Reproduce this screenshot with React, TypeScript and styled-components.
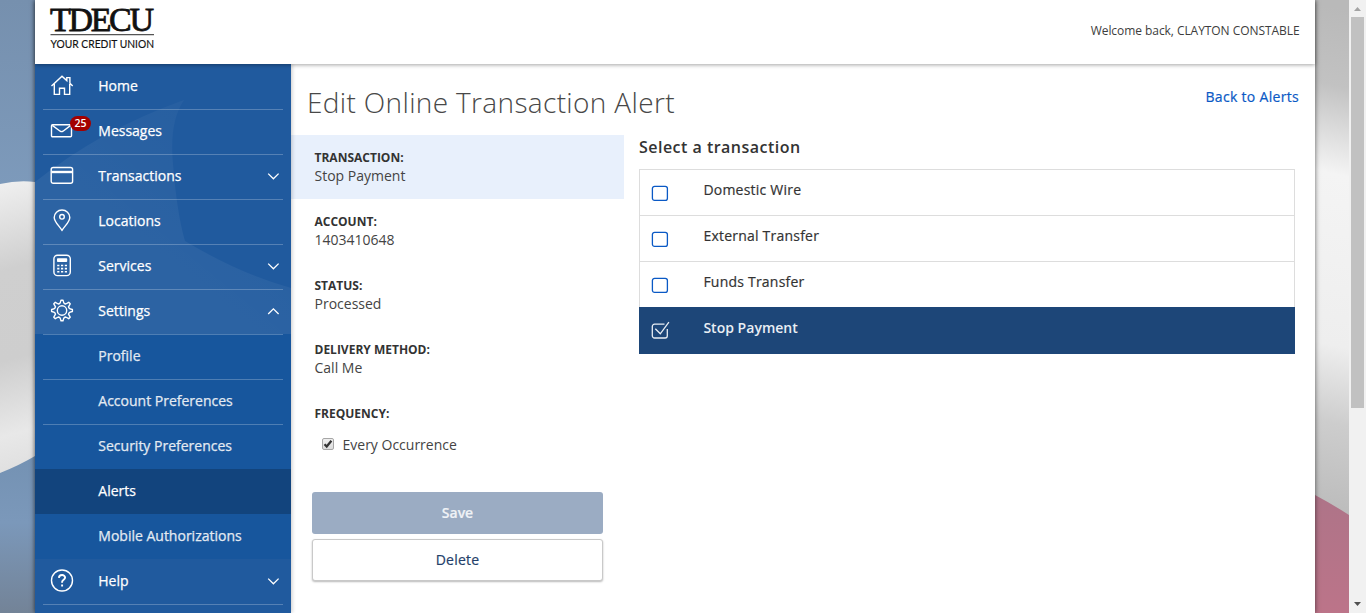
import React from 'react';
import styled, { createGlobalStyle } from 'styled-components';

const GlobalStyle = createGlobalStyle`
  *, *::before, *::after { box-sizing: border-box; }
  html, body { margin: 0; padding: 0; overflow: hidden; }
  body {
    font-family: "Open Sans", "Noto Sans", sans-serif;
    font-size: 14px;
    color: #333;
  }
`;

const Screen = styled.div`
  position: relative;
  display: flex;
  height: 613px;
  overflow: hidden;
`;

const Backdrop = styled.svg`
  position: absolute;
  top: 0;
  left: 0;
  z-index: -1;
`;

const Viewport = styled.div`
  flex: 1;
  display: flex;
  padding: 0 34px 0 35px;
`;

const Page = styled.div`
  flex: 1;
  display: flex;
  flex-direction: column;
  background: #fff;
  box-shadow: 0 0 5px rgba(0, 0, 0, 0.6);
`;

const Header = styled.header`
  position: relative;
  z-index: 1;
  display: flex;
  justify-content: space-between;
  height: 64px;
  padding: 0 15px;
  background: #fff;
  box-shadow: 0 1px 4px rgba(0, 0, 0, 0.36);
`;

const LogoMark = styled.svg`
  overflow: visible;
`;

const Welcome = styled.span`
  margin: 22px 0.5px 0 0;
  color: #3d3d3d;
  font-size: 12px;
  letter-spacing: -0.06px;
  line-height: 17px;
`;

const Body = styled.div`
  flex: 1;
  display: flex;
  min-height: 0;
`;

const Sidebar = styled.nav`
  position: relative;
  z-index: 0;
  width: 256px;
  background: #205a9e;
  box-shadow: 1px 0 4px rgba(0, 0, 0, 0.22);
`;

const SidebarArt = styled.svg`
  position: absolute;
  top: 0;
  left: 0;
  z-index: -1;
`;

const NavRow = styled.div<{ $sub?: boolean; $active?: boolean }>`
  height: 45px;
  padding: 0 8px;
  color: ${(p) => (p.$sub && !p.$active ? '#e3eaf2' : '#fff')};
  background: ${(p) => (p.$active ? '#12447d' : p.$sub ? '#17569d' : 'transparent')};
`;

const NavInner = styled.div<{ $line?: boolean }>`
  display: flex;
  align-items: center;
  height: 45px;
  padding: 0 3px 2px 7px;
  border-top: 1px solid ${(p) => (p.$line ? 'rgba(255, 255, 255, 0.24)' : 'transparent')};
`;

const IconSlot = styled.span`
  position: relative;
  display: flex;
  width: 24px;
  height: 24px;
  margin-right: 24.3px;
`;

const Badge = styled.span`
  position: absolute;
  top: -3px;
  left: 20px;
  width: 21px;
  height: 15px;
  border-radius: 8px;
  background: #a30000;
  font-size: 10.5px;
  font-weight: 600;
  line-height: 15px;
  text-align: center;
`;

const NavLabel = styled.span`
  flex: 1;
  line-height: 20px;
  white-space: nowrap;
  -webkit-text-stroke: 0.25px currentColor;
`;

const Main = styled.main`
  flex: 1;
  min-width: 0;
`;

const TitleBar = styled.div`
  display: flex;
  justify-content: space-between;
  height: 71px;
  padding: 0 16px;
`;

const Title = styled.h1`
  margin: 18px 0 0;
  color: #484848;
  font-size: 28px;
  font-weight: 300;
  letter-spacing: 0.35px;
  line-height: 40px;
`;

const BackLink = styled.a`
  margin: 23px 0 0;
  color: #0a59c5;
  letter-spacing: 0.31px;
  line-height: 20px;
  -webkit-text-stroke: 0.2px currentColor;
`;

const Columns = styled.div`
  display: flex;
`;

const Summary = styled.section`
  width: 333px;
`;

const Field = styled.div<{ $current?: boolean }>`
  height: 64px;
  padding: 14px 24px 0 23.5px;
  background: ${(p) => (p.$current ? '#e8f0fc' : 'transparent')};
`;

const FieldName = styled.div`
  font-size: 12px;
  font-weight: 700;
  line-height: 17px;
  text-transform: uppercase;
`;

const FieldValue = styled.div`
  color: #444;
  line-height: 20px;
`;

const Frequency = styled.label`
  display: flex;
  align-items: center;
  gap: 8.5px;
  height: 20px;
  margin: -21px 0 38px 31px;
  color: #444;
`;

const Tick = styled.span`
  display: flex;
  width: 12px;
  height: 12px;
  border: 1px solid #a6a6a6;
  border-radius: 2px;
  background: linear-gradient(#efefef, #dcdcdc);
`;

const Button = styled.button<{ $primary?: boolean }>`
  display: block;
  width: 291px;
  height: 42px;
  margin: 0 0 5px 21px;
  padding: 0;
  border: ${(p) => (p.$primary ? '0' : '1px solid #c9c9c9')};
  border-radius: 3px;
  background: ${(p) => (p.$primary ? '#9bacc3' : '#fff')};
  box-shadow: ${(p) => (p.$primary ? 'none' : '0 1px 2px rgba(0, 0, 0, 0.28)')};
  color: ${(p) => (p.$primary ? '#eff2f6' : '#23406a')};
  font: ${(p) => (p.$primary ? 600 : 400)} 14px/20px "Open Sans", sans-serif;
  letter-spacing: ${(p) => (p.$primary ? '0' : '0.2px')};
  -webkit-text-stroke: 0.2px currentColor;
`;

const Picker = styled.section`
  flex: 1;
  padding: 0 20px 0 15px;
`;

const PickerTitle = styled.h2`
  margin: 0 0 10px;
  padding-top: 1px;
  font-size: 16px;
  font-weight: 600;
  letter-spacing: 0.48px;
  line-height: 23px;
`;

const OptionList = styled.div`
  display: flex;
  flex-direction: column;
`;

const Option = styled.div<{ $selected?: boolean }>`
  display: flex;
  height: ${(p) => (p.$selected ? '47px' : '46px')};
  padding-left: 11px;
  border: 1px solid ${(p) => (p.$selected ? '#1d4678' : '#ddd')};
  border-bottom-width: ${(p) => (p.$selected ? '1px' : '0')};
  background: ${(p) => (p.$selected ? '#1d4678' : '#fff')};
  color: ${(p) => (p.$selected ? '#e9eef4' : '#333')};
  font-weight: ${(p) => (p.$selected ? 600 : 400)};
  letter-spacing: ${(p) => (p.$selected ? '0.02px' : '0.22px')};
  -webkit-text-stroke: ${(p) => (p.$selected ? '0' : '0.2px currentColor')};
`;

const OptionBox = styled.svg`
  margin: 13px 32.4px 0 0;
`;

const OptionLabel = styled.span`
  margin-top: 10px;
  line-height: 20px;
`;

const Scrollbar = styled.div`
  display: flex;
  flex-direction: column;
  align-items: center;
  width: 17px;
  background: #f1f1f1;
`;

const ScrollTrack = styled.div`
  flex: 1;
`;

const ScrollThumb = styled.div`
  width: 13px;
  height: 391px;
  background: #c1c1c1;
`;

type IconName = 'home' | 'mail' | 'card' | 'pin' | 'calc' | 'gear' | 'help';

const iconShapes: Record<IconName, React.ReactNode> = {
  home: (
    <path d="M1.500 12 12 2.200l4.800 4.400V3.600h3.100v5.700l2.800 2.700M4.300 10v10.400h5.200v-6.200h5v6.200h5.200V10" />
  ),
  mail: (
    <>
      <rect x="1.500" y="5.700" width="20" height="12" rx="1" />
      <path d="m2.300 6.400 7.900 5.800q1.400.9 2.800 0l7.700-5.800" />
    </>
  ),
  card: (
    <>
      <rect x="1.200" y="3.500" width="21.400" height="15.800" rx="2" />
      <path d="M1.500 8h21" strokeWidth="2.400" />
    </>
  ),
  pin: (
    <>
      <path d="M12 21.300C9 16.700 4.200 12.700 4.200 8.400a7.800 7.400 0 0 1 15.600 0c0 4.300-4.800 8.300-7.800 12.900Z" />
      <circle cx="12" cy="7.800" r="2.300" />
    </>
  ),
  calc: (
    <>
      <rect x="3.900" y="1.200" width="16.400" height="20.400" rx="3.600" />
      <rect x="7" y="4.300" width="10.200" height="3.700" rx=".8" fill="currentColor" stroke="none" />
      <path d="M7.200 11.500h9.800M7.200 14.600h9.800M7.200 17.700h9.800" strokeWidth="1.600" strokeDasharray="2.200 1.600" />
    </>
  ),
  gear: (
    <>
      <circle cx="12" cy="11.500" r="4.700" />
      <path
        strokeLinejoin="round"
        d="M11 1.200h2q.6 2.900 1.400 3.300l1.300.5 3-1.700 1.500 1.500-1.700 3 .6 1.400q.5.800 3.300 1.300v2q-2.800.5-3.300 1.300l-.6 1.400 1.700 3-1.500 1.500-3-1.700-1.300.5q-.8.400-1.400 3.300h-2q-.6-2.900-1.400-3.300l-1.300-.5-3 1.700-1.500-1.500 1.700-3-.6-1.400q-.5-.8-3.300-1.300v-2q2.800-.5 3.300-1.300l.6-1.400-1.700-3 1.500-1.500 3 1.700 1.300-.5q.8-.4 1.400-3.300Z"
      />
    </>
  ),
  help: (
    <>
      <circle cx="12" cy="11.500" r="10.500" />
      <path d="M8.900 8.900c.1-3.700 6.200-3.800 6.200-.3 0 2.100-3 2.300-3 4.500v.7M12.100 15.600v1.900" strokeWidth="1.900" />
    </>
  ),
};

function NavIcon({ name }: { name: IconName }) {
  return (
    <svg width="24" height="24" viewBox="0 0 24 24" fill="none" stroke="currentColor" strokeWidth="1.4">
      {iconShapes[name]}
    </svg>
  );
}

function Chevron({ up }: { up?: boolean }) {
  return (
    <svg width="14" height="10" viewBox="0 0 14 10" fill="none" stroke="#fff" strokeWidth="1.3">
      <path d={up ? 'M2.200 8 7.400 2.800 12.600 8' : 'M2.200 2.600 7.400 7.800l5.200-5.200'} />
    </svg>
  );
}

interface NavEntry {
  label: string;
  icon?: IconName;
  badge?: string;
  chevron?: 'up' | 'down';
  line?: boolean;
  active?: boolean;
}

const navEntries: NavEntry[] = [
  { label: 'Home', icon: 'home' },
  { label: 'Messages', icon: 'mail', badge: '25', line: true },
  { label: 'Transactions', icon: 'card', chevron: 'down', line: true },
  { label: 'Locations', icon: 'pin', line: true },
  { label: 'Services', icon: 'calc', chevron: 'down', line: true },
  { label: 'Settings', icon: 'gear', chevron: 'up', line: true },
  { label: 'Profile', line: true },
  { label: 'Account Preferences', line: true },
  { label: 'Security Preferences', line: true },
  { label: 'Alerts', active: true },
  { label: 'Mobile Authorizations' },
  { label: 'Help', icon: 'help', chevron: 'down' },
];

const fields = [
  { name: 'Transaction:', value: 'Stop Payment', current: true },
  { name: 'Account:', value: '1403410648' },
  { name: 'Status:', value: 'Processed' },
  { name: 'Delivery Method:', value: 'Call Me' },
  { name: 'Frequency:', value: '' },
];

const options = ['Domestic Wire', 'External Transfer', 'Funds Transfer', 'Stop Payment'];

function Logo() {
  return (
    <LogoMark width="120" height="60" viewBox="0 0 120 60">
      <text x="0" y="30.700" fontFamily="Liberation Serif" fontSize="34" textLength="104" lengthAdjust="spacing" fill="#111" stroke="#111" strokeWidth=".8">
        TDECU
      </text>
      <path d="M.5 34.700H104" stroke="#555" strokeWidth="1.300" />
      <text x="0.500" y="47.700" fontFamily="Lato" fontSize="11.400" textLength="103.500" lengthAdjust="spacingAndGlyphs" fill="#111" stroke="#111" strokeWidth=".15">
        YOUR CREDIT UNION
      </text>
    </LogoMark>
  );
}

function FlagBackdrop() {
  return (
    <Backdrop width="1349" height="613" viewBox="0 0 1349 613">
      <defs>
        <linearGradient id="skyTop" x1="0" y1="0" x2="0" y2="1">
          <stop offset="0" stopColor="#7690ae" />
          <stop offset="1" stopColor="#7d9abb" />
        </linearGradient>
        <linearGradient id="clothLeft" x1="0" y1="0" x2="0.05" y2="1">
          <stop offset="0" stopColor="#f0f0f0" />
          <stop offset="0.300" stopColor="#cfcfcf" />
          <stop offset="0.600" stopColor="#cecece" />
          <stop offset="0.850" stopColor="#e8e8e8" />
          <stop offset="1" stopColor="#dedede" />
        </linearGradient>
        <linearGradient id="skyBottom" x1="0" y1="0" x2="0" y2="1">
          <stop offset="0" stopColor="#7391b2" />
          <stop offset="0.450" stopColor="#7b98ba" />
          <stop offset="1" stopColor="#738397" />
        </linearGradient>
        <linearGradient id="clothRight" x1="0" y1="0" x2="-0.020" y2="1">
          <stop offset="0" stopColor="#b9b9b9" />
          <stop offset="0.150" stopColor="#c2c2c2" />
          <stop offset="0.320" stopColor="#f4f4f4" />
          <stop offset="0.650" stopColor="#eeeeee" />
          <stop offset="0.800" stopColor="#cdcdcd" />
          <stop offset="1" stopColor="#b9b9b9" />
        </linearGradient>
        <linearGradient id="rose" x1="0" y1="0" x2="0" y2="1">
          <stop offset="0" stopColor="#ad7488" />
          <stop offset="1" stopColor="#bc7489" />
        </linearGradient>
      </defs>
      <path fill="url(#skyTop)" d="M0 0h60v190H0z" />
      <path fill="url(#clothLeft)" d="M0 184q18-4 35-2h20v300H0z" />
      <path fill="url(#skyBottom)" d="M0 473q20-8 35-17l20-8v165H0z" />
      <path fill="url(#clothRight)" d="M1300 0h49v520h-49z" />
      <path fill="url(#rose)" d="M1300 487l15 8q17 9 34 20v98h-49z" />
    </Backdrop>
  );
}

export default function App() {
  return (
    <Screen>
      <GlobalStyle />
      <FlagBackdrop />
      <Viewport>
        <Page>
          <Header>
            <Logo />
            <Welcome>Welcome back, CLAYTON CONSTABLE</Welcome>
          </Header>
          <Body>
            <Sidebar>
              <SidebarArt width="256" height="549" viewBox="0 0 256 549">
                <defs>
                  <linearGradient id="fold" gradientUnits="userSpaceOnUse" x1="150" y1="30" x2="60" y2="140">
                    <stop offset="0" stopColor="#fff" stopOpacity=".03" />
                    <stop offset="1" stopColor="#fff" stopOpacity=".055" />
                  </linearGradient>
                </defs>
                <path
                  fill="url(#fold)"
                  d="M0 118Q65 66 149 36 134 58 138 100 142 150 150 177 205 210 256 224V270H0Z"
                />
              </SidebarArt>
              {navEntries.map((entry) => (
                <NavRow key={entry.label} $sub={!entry.icon} $active={entry.active}>
                  <NavInner $line={entry.line}>
                    <IconSlot>
                      {entry.icon && <NavIcon name={entry.icon} />}
                      {entry.badge && <Badge>{entry.badge}</Badge>}
                    </IconSlot>
                    <NavLabel>{entry.label}</NavLabel>
                    {entry.chevron && <Chevron up={entry.chevron === 'up'} />}
                  </NavInner>
                </NavRow>
              ))}
              <NavRow>
                <NavInner $line />
              </NavRow>
            </Sidebar>
            <Main>
              <TitleBar>
                <Title>Edit Online Transaction Alert</Title>
                <BackLink>Back to Alerts</BackLink>
              </TitleBar>
              <Columns>
                <Summary>
                  {fields.map((field) => (
                    <Field key={field.name} $current={field.current}>
                      <FieldName>{field.name}</FieldName>
                      <FieldValue>{field.value}</FieldValue>
                    </Field>
                  ))}
                  <Frequency>
                    <Tick>
                      <svg width="10" height="10" viewBox="0 0 10 10" fill="none" stroke="#333" strokeWidth="2.200">
                        <path d="m1.500 5.300 2.200 2.200L8.400 1.700" />
                      </svg>
                    </Tick>
                    Every Occurrence
                  </Frequency>
                  <Button $primary>Save</Button>
                  <Button>Delete</Button>
                </Summary>
                <Picker>
                  <PickerTitle>Select a transaction</PickerTitle>
                  <OptionList>
                    {options.map((option) => {
                      const selected = option === 'Stop Payment';
                      return (
                        <Option key={option} $selected={selected}>
                          <OptionBox width="20" height="20" viewBox="0 0 20 20" fill="none" stroke={selected ? '#e9eef4' : '#0a59c5'} strokeWidth="1.300">
                            {selected ? (
                              <path d="M13.500 3.200H3.500A2.200 2.200 0 0 0 1.300 5.400v9.400A2.200 2.200 0 0 0 3.500 17h10.600a2.200 2.200 0 0 0 2.200-2.200V8M4.300 7.700l5 5.100 8.600-11.600" />
                            ) : (
                              <rect x="1.400" y="3.400" width="15" height="14" rx="2.200" />
                            )}
                          </OptionBox>
                          <OptionLabel>{option}</OptionLabel>
                        </Option>
                      );
                    })}
                  </OptionList>
                </Picker>
              </Columns>
            </Main>
          </Body>
        </Page>
      </Viewport>
      <Scrollbar>
        <svg width="17" height="17" viewBox="0 0 17 17">
          <path fill="#a3a3a3" d="M5 11h7L8.500 7z" />
        </svg>
        <ScrollTrack>
          <ScrollThumb />
        </ScrollTrack>
        <svg width="17" height="17" viewBox="0 0 17 17">
          <path fill="#505050" d="M5 6h7l-3.500 4z" />
        </svg>
      </Scrollbar>
    </Screen>
  );
}
